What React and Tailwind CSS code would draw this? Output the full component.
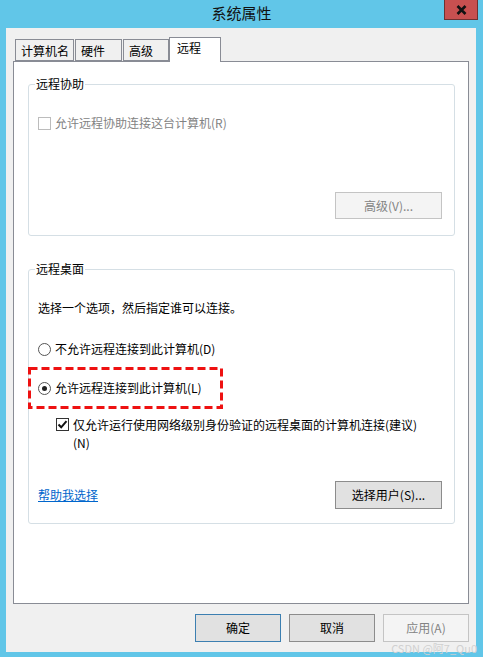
const font = "font-['Microsoft_YaHei','Noto_Sans_CJK_SC','Noto_Sans',sans-serif]";

const Checkbox = ({ checked, disabled }) => (
  <span
    className={`flex h-[13px] w-[13px] flex-shrink-0 items-center justify-center border bg-white ${
      disabled ? 'border-[#bcbcbc]' : 'border-[#333333]'
    }`}
  >
    {checked && (
      <svg width="11" height="11" viewBox="0 0 11 11">
        <path d="M1.5 5.5 L4.2 8.3 L9.5 2.2" fill="none" stroke="#111" strokeWidth="2" />
      </svg>
    )}
  </span>
);

const Radio = ({ checked }) => (
  <span className="flex h-[13px] w-[13px] flex-shrink-0 items-center justify-center rounded-full border border-[#555555] bg-white">
    {checked && <span className="h-[5px] w-[5px] rounded-full bg-[#222222]" />}
  </span>
);

const Button = ({ children, disabled, primary, className = '' }) => (
  <button
    type="button"
    className={`flex items-center justify-center border text-[12px] leading-none ${
      disabled
        ? 'border-[#c4c4c4] bg-[#f4f4f4] text-[#838383]'
        : primary
        ? 'border-[#3c7fb1] bg-[#e1e1e1] text-black'
        : 'border-[#8c8c8c] bg-[#e1e1e1] text-black'
    } ${className}`}
  >
    {children}
  </button>
);

const Tab = ({ label, active, className = '' }) =>
  active ? (
    <div className={`relative z-10 h-[25px] border border-b-0 border-[#898c95] bg-white pl-[7px] pt-[2px] leading-[16px] ${className}`}>
      {label}
    </div>
  ) : (
    <div className={`mt-[2px] h-[22px] border border-[#898c95] bg-[#f0f0f0] pl-[5px] pt-[3px] leading-[16px] ${className}`}>
      {label}
    </div>
  );

const App = () => {
  return (
    <div className={`relative h-[657px] w-[483px] overflow-hidden bg-[#61c6e8] text-[12px] text-black ${font}`}>
      {/* barra de titulo */}
      <div className="relative flex h-[28px] items-center justify-center pb-[2px] text-[15px] text-[#111]">
        系统属性
        <div className="absolute right-[5px] top-0 flex h-[20px] w-[34px] items-center justify-center border border-t-0 border-[#6e3131] bg-[#c75050]">
          <svg width="11" height="10" viewBox="0 0 11 10">
            <path d="M1.5 1 L9.5 9 M9.5 1 L1.5 9" stroke="#111" strokeWidth="2.6" />
          </svg>
        </div>
      </div>

      {/* area cliente */}
      <div className="ml-[6px] mr-[7px] flex h-[624px] flex-col bg-[#f0f0f0] px-[7px] pt-[9px]">
        <div className="flex h-[24px] items-start pl-[2px]">
          <Tab label="计算机名" className="w-[59px]" />
          <Tab label="硬件" className="ml-px w-[47px]" />
          <Tab label="高级" className="ml-px w-[46px]" />
          <Tab label="远程" active className="w-[52px]" />
        </div>

        <div className="h-[543px] border border-[#898c95] bg-white pl-[14px] pr-[13px] pt-[14px]">
          <fieldset className="rounded-[3px] border border-[#d5dfe5]">
            <legend className="ml-[6px] px-[1px] leading-[16px]">远程协助</legend>
            <div className="pl-[9px] pr-[12px]">
              <div className="mt-[23px] flex h-[16px] items-center gap-[4px] text-[#838383]">
                <Checkbox disabled />
                允许远程协助连接这台计算机(R)
              </div>
              <div className="mb-[16px] mt-[61px] flex justify-end">
                <Button disabled className="h-[27px] w-[107px]">高级(V)...</Button>
              </div>
            </div>
          </fieldset>

          <fieldset className="mt-[25px] rounded-[3px] border border-[#d5dfe5]">
            <legend className="ml-[6px] px-[1px] leading-[16px]">远程桌面</legend>
            <div className="pl-[9px] pr-[12px]">
              <div className="mt-[23px] h-[16px] leading-[16px]">选择一个选项，然后指定谁可以连接。</div>
              <div className="mt-[25px] flex h-[16px] items-center gap-[4px]">
                <Radio />
                不允许远程连接到此计算机(D)
              </div>
              <div className="relative mt-[23px] flex h-[16px] items-center gap-[4px]">
                <Radio checked />
                允许远程连接到此计算机(L)
                <svg className="absolute left-[-10px] top-[-13px]" width="195" height="42" viewBox="0 0 195 42">
                  <rect x="1.5" y="1.5" width="192" height="39" fill="none" stroke="#ee1111" strokeWidth="3" strokeDasharray="8 4" />
                </svg>
              </div>
              <div className="ml-[18px] mt-[20px] flex gap-[4px] leading-[18px]">
                <span className="mt-[2px]">
                  <Checkbox checked />
                </span>
                <div>
                  仅允许运行使用网络级别身份验证的远程桌面的计算机连接(建议)
                  <br />
                  (N)
                </div>
              </div>
              <div className="mb-[14px] mt-[29px] flex h-[28px] items-center justify-between">
                <span className="text-[#0066cc] underline">帮助我选择</span>
                <Button className="h-[28px] w-[107px]">选择用户(S)...</Button>
              </div>
            </div>
          </fieldset>
        </div>

        <div className="mt-[10px] flex justify-end gap-[8px]">
          <Button primary className="h-[28px] w-[86px]">确定</Button>
          <Button className="h-[28px] w-[86px]">取消</Button>
          <Button disabled className="h-[28px] w-[86px]">应用(A)</Button>
        </div>
      </div>

      <div className="absolute bottom-[3px] right-[6px] text-[11px] leading-none text-[#d0d0d0]">CSDN @阿7_Qu0</div>
    </div>
  );
};

export default App;
